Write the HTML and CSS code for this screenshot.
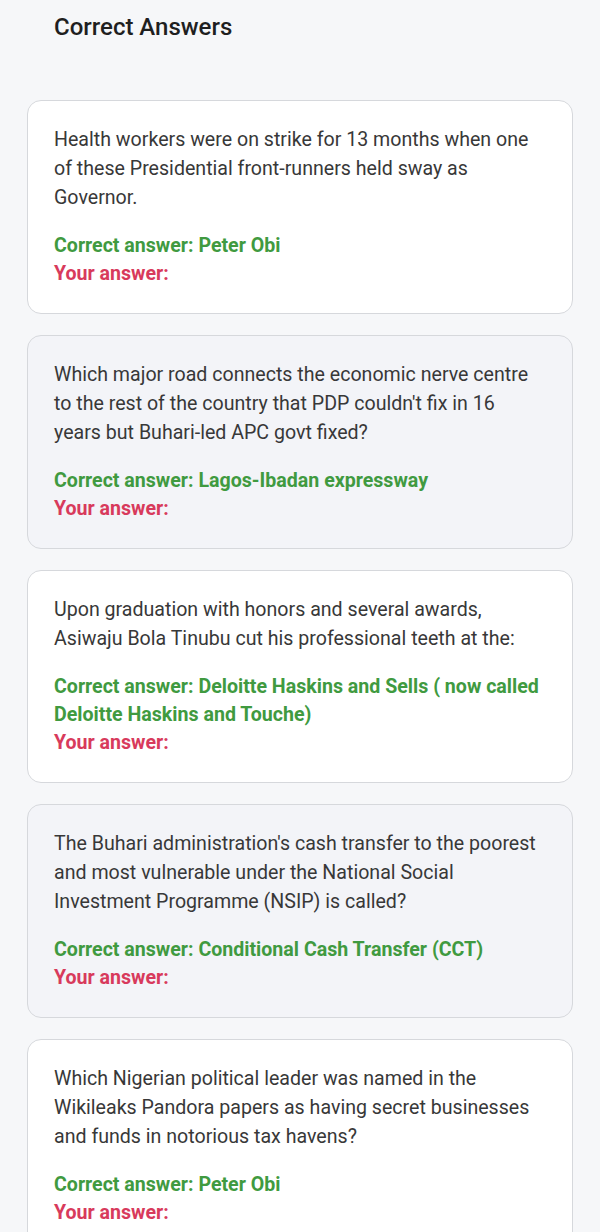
FILE: index.html
```html
<!DOCTYPE html>
<html lang="en">
<head>
<meta charset="utf-8">
<title>Correct Answers</title>
<link rel="stylesheet" href="styles.css">
</head>
<body>
<main class="page">
  <h1 class="title">Correct Answers</h1>
  <section class="list">
    <article class="card">
      <p class="question">Health workers were on strike for 13 months when one of these Presidential front-runners held sway as Governor.</p>
      <p class="correct">Correct answer: Peter Obi</p>
      <p class="yours">Your answer:</p>
    </article>
    <article class="card alt">
      <p class="question">Which major road connects the economic nerve centre to the rest of the country that PDP couldn't fix in 16 years but Buhari-led APC govt fixed?</p>
      <p class="correct">Correct answer: Lagos-Ibadan expressway</p>
      <p class="yours">Your answer:</p>
    </article>
    <article class="card">
      <p class="question">Upon graduation with honors and several awards, Asiwaju Bola Tinubu cut his professional teeth at the:</p>
      <p class="correct">Correct answer: Deloitte Haskins and Sells ( now called Deloitte Haskins and Touche)</p>
      <p class="yours">Your answer:</p>
    </article>
    <article class="card alt">
      <p class="question">The Buhari administration's cash transfer to the poorest and most vulnerable under the National Social Investment Programme (NSIP) is called?</p>
      <p class="correct">Correct answer: Conditional Cash Transfer (CCT)</p>
      <p class="yours">Your answer:</p>
    </article>
    <article class="card">
      <p class="question">Which Nigerian political leader was named in the Wikileaks Pandora papers as having secret businesses and funds in notorious tax havens?</p>
      <p class="correct">Correct answer: Peter Obi</p>
      <p class="yours">Your answer:</p>
    </article>
  </section>
</main>
</body>
</html>
```

FILE: styles.css
```css
html, body {
  margin: 0;
  padding: 0;
  background: #f6f7f9;
}
body {
  font-family: Roboto, "Liberation Sans", Arial, sans-serif;
  color: #333;
}
.page {
  padding: 12px 27px 40px;
}
.title {
  margin: 0 0 58px 27px;
  font-size: 24px;
  line-height: 30px;
  font-weight: 500;
  color: #1f1f1f;
}
.list {
  display: flex;
  flex-direction: column;
  gap: 21px;
}
.card {
  background: #ffffff;
  border: 1px solid #d6d8dc;
  border-radius: 14px;
  padding: 24px 26px 25px;
}
.card.alt {
  background: #f3f4f8;
}
.card p {
  margin: 0;
  font-size: 19.6px;
  line-height: 29px;
}
.question {
  color: #383838;
  margin-bottom: 20px !important;
}
.correct {
  color: #409a40;
  font-weight: 700;
  line-height: 28px !important;
}
.yours {
  color: #d83a5c;
  font-weight: 700;
  line-height: 28px !important;
}
```
